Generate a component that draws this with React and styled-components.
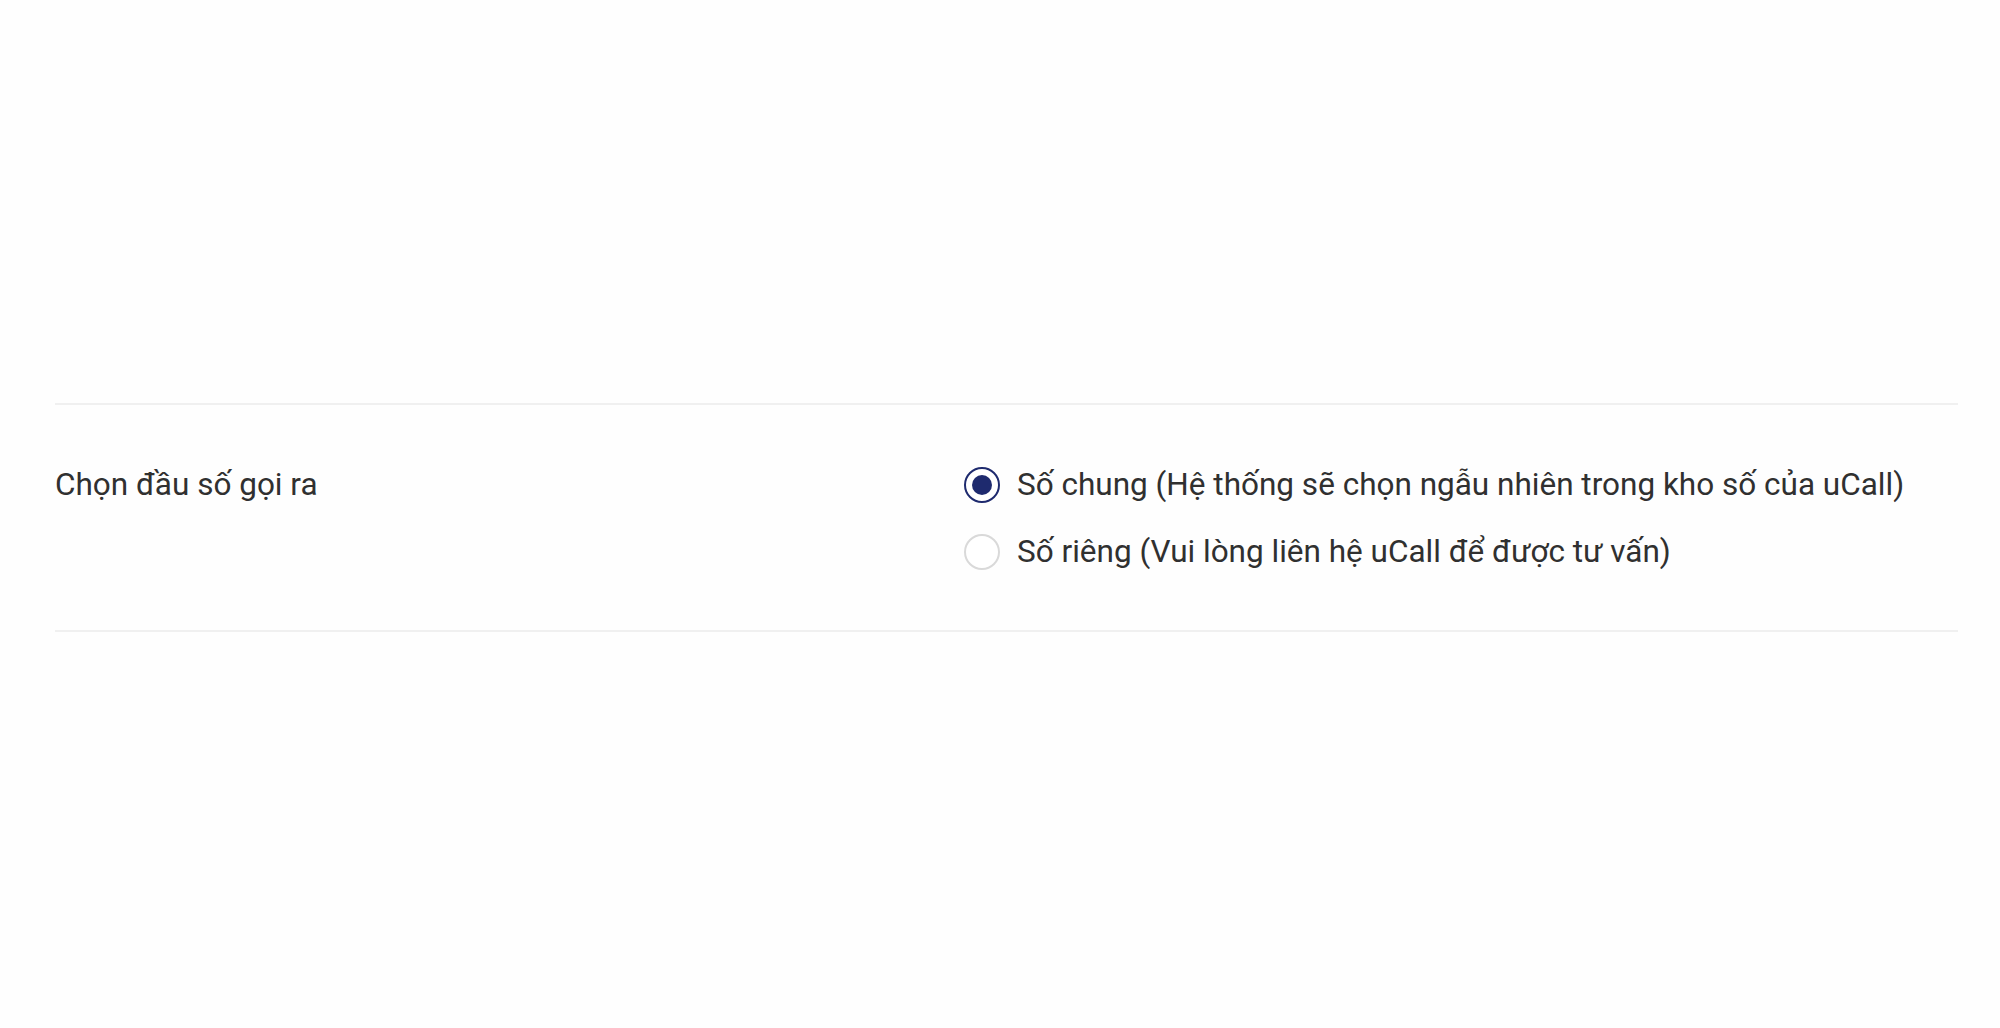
import React, { useState } from 'react';
import styled, { createGlobalStyle } from 'styled-components';

const GlobalStyle = createGlobalStyle`
  html, body {
    margin: 0;
    padding: 0;
    background: #fefefe;
  }
  body {
    font-family: Roboto, "Noto Sans", "Liberation Sans", sans-serif;
    color: #303030;
  }
`;

const options = [
  { value: 'common', label: 'Số chung (Hệ thống sẽ chọn ngẫu nhiên trong kho số của uCall)' },
  { value: 'private', label: 'Số riêng (Vui lòng liên hệ uCall để được tư vấn)' },
];

const App = () => {
  const [choice, setChoice] = useState('common');

  return (
    <>
      <GlobalStyle />
      <Page>
        <SettingRow>
          <Label>Chọn đầu số gọi ra</Label>
          <RadioGroup>
            {options.map(opt => (
              <RadioItem key={opt.value} onClick={() => setChoice(opt.value)}>
                <RadioCircle checked={choice === opt.value} />
                <span>{opt.label}</span>
              </RadioItem>
            ))}
          </RadioGroup>
        </SettingRow>
      </Page>
    </>
  );
};

const Page = styled.div`
  height: 1028px;
  padding: 403px 42px 0 55px;
  box-sizing: border-box;
`;

const SettingRow = styled.div`
  display: grid;
  grid-template-columns: 909px 1fr;
  align-items: start;
  padding: 46px 0 45px;
  border-top: 2px solid #f0f0f0;
  border-bottom: 2px solid #f0f0f0;
  font-size: 31.5px;
  line-height: 67px;
`;

const Label = styled.div`
  white-space: nowrap;
`;

const RadioGroup = styled.div`
  display: flex;
  flex-direction: column;
`;

const RadioItem = styled.label`
  display: flex;
  align-items: center;
  gap: 17px;
  cursor: pointer;
  white-space: nowrap;
`;

const RadioCircle = styled.span`
  position: relative;
  flex: none;
  width: 36px;
  height: 36px;
  box-sizing: border-box;
  border-radius: 50%;
  border: 2px solid ${p => (p.checked ? '#1e2a6e' : '#d9d9d9')};
  background: #fff;
  &::after {
    content: '';
    position: absolute;
    inset: 6px;
    border-radius: 50%;
    background: #1e2a6e;
    display: ${p => (p.checked ? 'block' : 'none')};
  }
`;

export default App;
